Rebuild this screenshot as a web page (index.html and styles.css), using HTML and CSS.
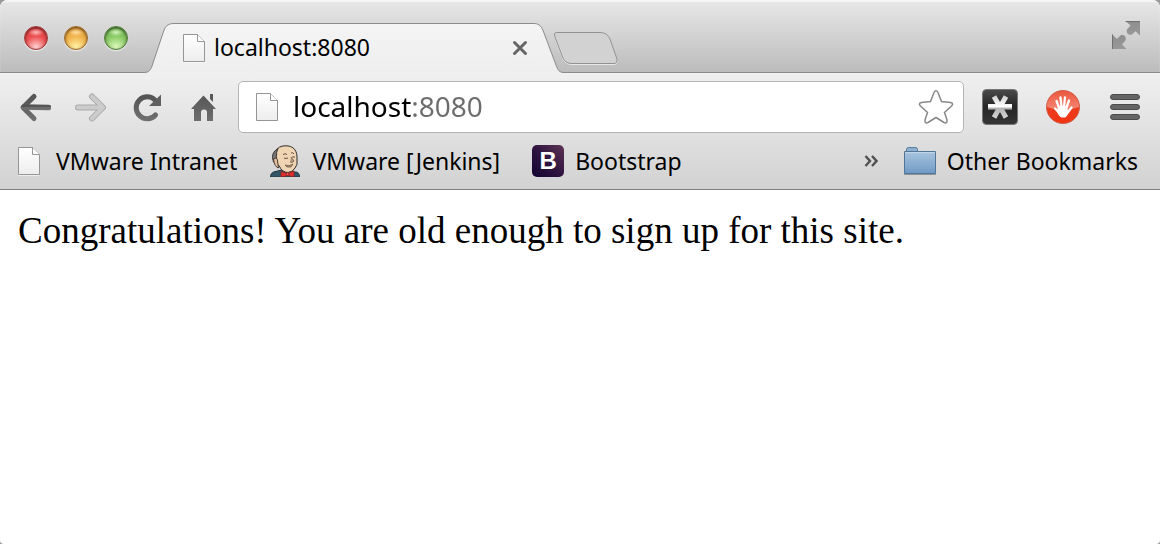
FILE: index.html
```html
<!DOCTYPE html>
<html lang="en">
<head>
<meta charset="utf-8">
<meta name="viewport" content="width=device-width, initial-scale=1">
<title>localhost:8080</title>
<link rel="stylesheet" href="styles.css">
</head>
<body>
<svg class="defs" width="0" height="0" aria-hidden="true">
  <defs>
    <linearGradient id="paper" x1="0" y1="0" x2="0" y2="1"><stop offset="0" stop-color="#fff"/><stop offset="1" stop-color="#ededed"/></linearGradient>
    <linearGradient id="tabfill" x1="0" y1="0" x2="0" y2="1"><stop offset="0" stop-color="#f4f4f4"/><stop offset="1" stop-color="#eee"/></linearGradient>
    <linearGradient id="glyph" x1="0" y1="0" x2="0" y2="1"><stop offset="0" stop-color="#555"/><stop offset="1" stop-color="#6e6e6e"/></linearGradient>
    <linearGradient id="expand" x1="0" y1="0" x2="0" y2="1"><stop offset="0" stop-color="#8e8e8e"/><stop offset="1" stop-color="#999"/></linearGradient>
    <linearGradient id="folder" x1="0" y1="0" x2="0" y2="1"><stop offset="0" stop-color="#a9c5df"/><stop offset="1" stop-color="#6f9ac4"/></linearGradient>
    <linearGradient id="dark" x1="0" y1="0" x2="0" y2="1"><stop offset="0" stop-color="#4a4a4a"/><stop offset=".5" stop-color="#252525"/><stop offset="1" stop-color="#363636"/></linearGradient>
    <linearGradient id="star" gradientUnits="userSpaceOnUse" x1="0" y1="6" x2="0" y2="30"><stop offset="0" stop-color="#ccc"/><stop offset=".48" stop-color="#fff"/><stop offset=".56" stop-color="#b4b4b4"/><stop offset="1" stop-color="#d8d8d8"/></linearGradient>
    <linearGradient id="stop" x1="0" y1="0" x2="0" y2="1"><stop offset="0" stop-color="#e8452c"/><stop offset="1" stop-color="#f03412"/></linearGradient>
    <linearGradient id="gloss" x1="0" y1="0" x2="0" y2="1"><stop offset="0" stop-color="#fff" stop-opacity=".1"/><stop offset="1" stop-color="#fff" stop-opacity=".4"/></linearGradient>
    <symbol id="page" viewBox="0 0 24 30">
      <path d="M1.500 29.500h21" stroke="#fff" opacity=".6"/>
      <path d="M1.500 1.500h14l7 7v20h-21z" fill="url(#paper)" stroke="#959595"/>
      <path d="M15.500 1.500v7h7" fill="#fff" stroke="#959595"/>
    </symbol>
  </defs>
</svg>
<div class="window">
  <header class="chrome">
    <div class="strip">
      <div class="lights">
        <button class="light red" aria-label="Close window"></button>
        <button class="light amber" aria-label="Minimize window"></button>
        <button class="light green" aria-label="Zoom window"></button>
      </div>
      <div class="tab">
        <svg class="edge" width="30" height="50" viewBox="0 0 30 50" aria-hidden="true"><path d="M0 49.500C5 49.500 6.500 47 8 43L19 10C21 4 23 .5 30 .5V50H0z" fill="url(#tabfill)"/><path d="M0 49.500C5 49.500 6.500 47 8 43L19 10C21 4 23 .5 30 .5" fill="none" stroke="#8b8b8b"/></svg>
        <div class="tab-body">
          <svg class="page" aria-hidden="true"><use href="#page"/></svg>
          <span class="tab-title">localhost:8080</span>
          <button class="tab-close" aria-label="Close tab"><svg width="16" height="16" viewBox="0 0 16 16"><path d="M2.500 2.500l11 11M13.500 2.500l-11 11" stroke="#666" stroke-width="3" stroke-linecap="round"/></svg></button>
        </div>
        <svg class="edge" width="30" height="50" viewBox="0 0 30 50" aria-hidden="true"><path d="M30 49.500C25 49.500 24 47 22 42L10 10C8 4 5.500 .5 0 .5V50H30z" fill="url(#tabfill)"/><path d="M30 49.500C25 49.500 24 47 22 42L10 10C8 4 5.500 .5 0 .5" fill="none" stroke="#8b8b8b"/></svg>
      </div>
      <button class="new-tab" aria-label="New tab"><svg width="68" height="36" viewBox="0 0 68 36"><path d="M4.500 2.500H48C53 2.500 56 5 58 9L65 29C65.500 32 64 33.500 62 33.500H20C15 33.500 12 31 10.500 27L3 7C2 4 2.500 2.500 4.500 2.500z" fill="none" stroke="#e8e8e8"/><path d="M4.500 1.500H48C53 1.500 56 4 58 8L65 28C65.500 31 64 32.500 62 32.500H20C15 32.500 12 30 10.500 26L3 6C2 3 2.500 1.500 4.500 1.500z" fill="#d2d2d2" stroke="#919191"/></svg></button>
      <button class="fullscreen" aria-label="Enter full screen"><svg width="30" height="30" viewBox="0 0 30 30" fill="url(#expand)"><path d="M14.500 1H29v14.500l-4.500-4.200-3.500 3.200c-2.500 1.500-6.500-1.500-5-5l3.500-4z"/><path d="M1 14.500V29h14.500l-4.500-4.500 3.500-4c1.500-3.500-2-6.500-5-5L6 19z"/><path d="M14.500 1.500H29M1.500 14.500V29" stroke="#707070" fill="none"/></svg></button>
    </div>
    <div class="toolbar">
      <nav class="controls" aria-label="Browser">
        <button class="tool" aria-label="Back"><svg width="32" height="32" viewBox="0 0 32 32" fill="none" stroke="url(#glyph)" stroke-linecap="round" stroke-linejoin="round"><path d="M15 5.500L4 16.500l11 11" stroke-width="5"/><path d="M5 16L29.500 16.500" stroke-width="5.500"/></svg></button>
        <button class="tool" aria-label="Forward" disabled><svg width="32" height="32" viewBox="0 0 32 32" fill="none" stroke-linecap="round" stroke-linejoin="round"><g stroke="#aaa"><path d="M17 5.500l11 11-11 11" stroke-width="6"/><path d="M3 16.500h24" stroke-width="6"/></g><g stroke="#ccc"><path d="M17 5.500l11 11-11 11" stroke-width="4"/><path d="M3 16.500h24" stroke-width="4"/></g></svg></button>
        <button class="tool" aria-label="Reload"><svg width="32" height="32" viewBox="0 0 32 32"><path d="M24.500 24A11 11 0 1 1 24 9" fill="none" stroke="url(#glyph)" stroke-width="5" stroke-linecap="round"/><path d="M30 3.500v11.500H18z" fill="#606060"/></svg></button>
        <button class="tool" aria-label="Home"><svg width="32" height="32" viewBox="0 0 32 32" fill="url(#glyph)"><path d="M16.500 4.500L29 18h-3v12h-6v-8.500a3 3 0 0 0-6 0V30H7V18H4zM23 3h3v8l-3-3z"/></svg></button>
      </nav>
      <div class="omnibox">
        <svg class="page" aria-hidden="true"><use href="#page"/></svg>
        <input class="address" type="text" value="localhost:8080" aria-label="Address" spellcheck="false">
        <button class="star" aria-label="Bookmark this page"><svg width="36" height="36" viewBox="0 0 36 36"><path d="M16 3.500Q18 0 20 3.500L23.500 12.500 32.500 13.500Q36.500 14.500 33 17.500L26.500 23.500 29 31Q29.500 35 26 33.500L18 28.500 10 33.500Q6.500 35 7 31L9.500 23.500 3 17.500Q-.5 14.500 3.500 13.500L12.500 12.500z" fill="#fff" stroke="#888" stroke-width="1.500"/></svg></button>
      </div>
      <div class="extensions">
        <button class="extension" aria-label="Asterisk extension"><svg width="36" height="36" viewBox="0 0 36 36"><rect x=".5" y=".5" width="35" height="35" rx="4" fill="url(#dark)" stroke="#777"/><path d="M12 7.500l12 21M24 7.500l-12 21" stroke="url(#star)" stroke-width="5"/><path d="M6 15h24v5.500H6z" fill="url(#star)"/></svg></button>
        <button class="extension" aria-label="Hand extension"><svg width="36" height="36" viewBox="0 0 36 36"><circle cx="18" cy="18" r="16.500" fill="url(#stop)" stroke="#cf604c"/><path d="M2 18a16 16 0 0 1 32 0q-16 6-32 0z" fill="url(#gloss)"/><path d="M14.500 20L11.500 12M16.500 18L15.500 8.500M19 18L20 8.500M21 20L24 11.500M14 23.500L10 19.500M22 24.500L26.500 18.500" stroke="#fff" stroke-width="2.300" stroke-linecap="round"/><path d="M13 18.500q4-3 9-.5l1 3.500c0 3-.5 5-2 6.500q-2.500 1-5.500 0c-2-1.500-3-4-4-6z" fill="#fff"/></svg></button>
        <button class="menu" aria-label="Menu"><svg width="30" height="36" viewBox="0 0 30 36"><g fill="#656565" stroke="#4b4b4b"><rect x=".5" y="5.500" width="29" height="5" rx="2.500"/><rect x=".5" y="15.500" width="29" height="5" rx="2.500"/><rect x=".5" y="25.500" width="29" height="5" rx="2.500"/></g></svg></button>
      </div>
    </div>
    <nav class="bookmarks" aria-label="Bookmarks">
      <a class="bookmark" href="#"><svg class="page" aria-hidden="true"><use href="#page"/></svg>VMware Intranet</a>
      <a class="bookmark" href="#"><svg width="32" height="32" viewBox="0 0 32 32" aria-hidden="true">
        <path d="M1.500 32q0-4 3-5l8-2 14 2q4 0 4 5z" fill="#2f5566" stroke="#243a44"/>
        <path d="M5 17C3 8 8 1 16 .8 25 .5 28.500 6 28 14q1 6-2 9-2 4-7 4.500-6 0-9-7z" fill="#f0d5b4" stroke="#2f2b28"/>
        <path d="M4.500 17Q1 8 9 3.500q-2 4-1.500 8L8 19z" fill="#757573" stroke="#3a3937"/>
        <path d="M4.500 14q4-2 4 2l1 7q-4-1-5-9z" fill="#e5c19f" stroke="#4a3f37"/>
        <path d="M14 9.500q2-1.500 4 0M22 8q2-1 3 1M15 13q2 1 4 0M23 12h3" fill="none" stroke="#66513f"/>
        <path d="M22 12l3 4q-1 2-4 1M16 20q4 2 8-1l-2 3h-4z" fill="#b99a80" stroke="#6b5647" stroke-width=".8"/>
        <path d="M12 26.500l6 2 7-2.500v6l-6-1.500-7 1.500z" fill="#e02f2c" stroke="#8a2424" stroke-width=".8"/><circle cx="18.500" cy="29" r="1.500" fill="#f0504a" stroke="#8a2424" stroke-width=".8"/>
      </svg>VMware [Jenkins]</a>
      <a class="bookmark" href="#"><span class="boot" aria-hidden="true">B</span>Bootstrap</a>
      <div class="overflow">
        <button class="more" aria-label="More bookmarks"><svg width="14" height="12" viewBox="0 0 14 12"><path d="M1.500 1L6 6l-4.500 5M8 1l4.500 5L8 11" fill="none" stroke="#505050" stroke-width="2.400"/></svg></button>
        <a class="bookmark" href="#"><svg width="32" height="30" viewBox="0 0 32 30" aria-hidden="true"><path d="M2.500 6V3.500Q2.500 1.500 4.500 1.500h7Q13.500 1.500 13.500 3.500V6" fill="#8eafd0" stroke="#587c9e"/><path d="M.5 5.500h31v22H.5z" fill="url(#folder)" stroke="#527796"/><path d="M1 6.500h30" stroke="#c0d5e8"/><path d="M0 28.500h32" stroke="#8b9299"/></svg>Other Bookmarks</a>
      </div>
    </nav>
  </header>
  <main class="content">Congratulations! You are old enough to sign up for this site.</main>
</div>
</body>
</html>
```
FILE: styles.css
```css
* { box-sizing: border-box; }
body {
  margin: 0;
  background: #999;
  color: #000;
  font-family: "Noto Sans", "Open Sans", sans-serif;
  font-size: 23px;
  line-height: 32px;
}
button {
  display: flex;
  flex: none;
  padding: 0;
  border: 0;
  background: none;
}
svg { display: block; flex: none; }
.defs { position: absolute; }
.window {
  display: flex;
  flex-direction: column;
  min-height: 100vh;
  overflow: hidden;
  border-radius: 8px 8px 4px 4px;
  background: #fff;
}
.chrome {
  border-bottom: 1px solid #7d7d7d;
  background: linear-gradient(#f0f0f0 72px, #d2d2d2);
}
.strip {
  display: flex;
  align-items: flex-end;
  height: 73px;
  border-bottom: 1px solid #8b8b8b;
  background: linear-gradient(#e8e8e8, #bcbcbc);
  box-shadow: inset 0 2px 1px #f4f4f4;
}
.lights {
  display: flex;
  gap: 16px;
  padding: 0 16px 22px 24px;
}
.light {
  width: 24px;
  height: 24px;
  border-radius: 50%;
  box-shadow: 0 1px 1px #eee, inset 0 1px 3px rgba(0, 0, 0, .6);
}
.red { border: 1px solid #a3393c; background: radial-gradient(ellipse 8px 4px at 50% 24%, #fbb, transparent), radial-gradient(circle at 50% 95%, #fcc 5%, #ec4f50 50%, #d83a3b); }
.amber { border: 1px solid #9f6a28; background: radial-gradient(ellipse 8px 4px at 50% 24%, #ffdfa0, transparent), radial-gradient(circle at 50% 95%, #fff0a0 5%, #f2b44e 50%, #d98f2c); }
.green { border: 1px solid #4e7d38; background: radial-gradient(ellipse 8px 4px at 50% 24%, #d5f5bd, transparent), radial-gradient(circle at 50% 95%, #d9f8b9 5%, #8bca66 50%, #64a445); }
.tab {
  display: flex;
  flex: 0 1 420px;
  min-width: 300px;
  height: 50px;
  margin-bottom: -1px;
}
.tab-body {
  display: flex;
  flex: 1;
  align-items: center;
  padding: 0 6px 2px 8px;
  border-top: 1px solid #8b8b8b;
  background: linear-gradient(#f4f4f4, #eee);
}
.page { width: 24px; height: 30px; }
.tab-title { flex: 1; padding: 0 0 2px 8px; }
.new-tab { margin: 0 auto 5px -12px; }
.fullscreen { margin: 0 19px 22px 0; }
.toolbar {
  display: flex;
  align-items: center;
  padding: 8px 20px 0 19px;
}
.controls { display: flex; gap: 24px; }
.omnibox {
  display: flex;
  flex: 1;
  align-items: center;
  min-width: 0;
  height: 52px;
  margin-left: 19px;
  padding: 0 9px 0 16px;
  border: 1px solid #b4b4b4;
  border-radius: 5px;
  background: #fff;
}
.address {
  flex: 1;
  min-width: 0;
  padding: 0 0 2px 14px;
  border: 0;
  outline: 0;
  background: linear-gradient(90deg, #000 132px, #6c6c6c 132px);
  background-clip: text;
  color: transparent;
  caret-color: #000;
  font: inherit;
  font-size: 28px;
  line-height: 40px;
}
.extensions { display: flex; padding-left: 18px; }
.extension { margin-right: 27px; }
.menu { margin-left: 2px; }
.bookmarks {
  display: flex;
  align-items: center;
  height: 56px;
  padding: 0 22px 0 17px;
}
.bookmark {
  display: flex;
  align-items: center;
  gap: 11px;
  margin-right: 32px;
  color: #000;
  text-decoration: none;
  white-space: nowrap;
}
.bookmark .page { margin-right: 4px; }
.boot {
  width: 32px;
  height: 32px;
  border-radius: 5px;
  background: linear-gradient(45deg, #12042f, #2f1440 50%, #5f3555);
  color: #fff;
  font: bold 24px/32px "Liberation Sans", Arial, sans-serif;
  text-align: center;
}
.overflow {
  display: flex;
  align-items: center;
  gap: 26px;
  margin-left: auto;
}
.overflow .bookmark { margin-right: 0; }
.content {
  flex: 1;
  padding: 20px 18px;
  font: 37px/42px "Liberation Serif", "Times New Roman", serif;
}
```
